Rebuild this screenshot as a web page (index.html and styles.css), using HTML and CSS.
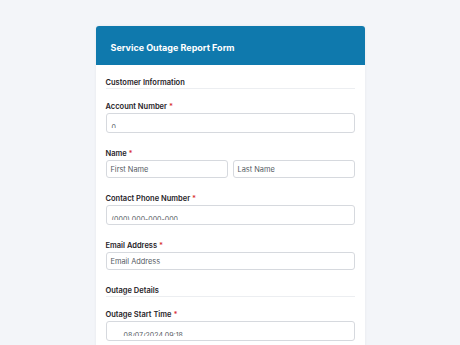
FILE: index.html
```html
<!DOCTYPE html>
<html lang="en">
<head>
    <meta charset="utf-8">
    <meta name="viewport" content="width=device-width, initial-scale=1.0">
    <title>Service Outage Report Form</title>
    <link rel="stylesheet" href="styles.css">
</head>
<body>

    <div class="card">
        <div class="card-head">Service Outage Report Form</div>

        <div class="card-body">
            <!-- 顧客情報 -->
            <div class="section">Customer Information</div>

            <div class="group">
                <div class="label">Account Number <span class="req">*</span></div>
                <div class="field tall"><div class="clip">0</div></div>
            </div>

            <div class="group">
                <div class="label">Name <span class="req">*</span></div>
                <div class="pair">
                    <div class="field"><span class="ph">First Name</span></div>
                    <div class="field"><span class="ph">Last Name</span></div>
                </div>
            </div>

            <div class="group">
                <div class="label">Contact Phone Number <span class="req">*</span></div>
                <div class="field tall"><div class="clip">(000) 000-000-000</div></div>
            </div>

            <div class="group">
                <div class="label">Email Address <span class="req">*</span></div>
                <div class="field"><span class="ph">Email Address</span></div>
            </div>

            <!-- 障害の詳細 -->
            <div class="section">Outage Details</div>

            <div class="group">
                <div class="label">Outage Start Time <span class="req">*</span></div>
                <div class="field tall"><div class="clip indent">08/07/2024 09:18</div></div>
            </div>
        </div>
    </div>

</body>
</html>
```

FILE: styles.css
```css
body {
    margin: 0;
    padding-top: 26px;
    background-color: #f3f5f9;
    font-family: Inter, "Liberation Sans", sans-serif;
    color: #1f2328;
}

/* カード */
.card {
    width: 269px;
    margin: 0 auto;
    background: #fff;
    border-radius: 3px 3px 0 0;
    box-shadow: 0 0 3px rgba(0, 0, 0, 0.06);
}

.card-head {
    box-sizing: border-box;
    height: 39px;
    padding: 3px 0 0 15px;
    display: flex;
    align-items: center;
    background-color: #0f79ad;
    color: #fff;
    font-size: 9px;
    font-weight: 700;
    border-radius: 3px 3px 0 0;
}

.card-body {
    padding: 13px 10px 10px;
}

/* 見出し */
.section {
    font-size: 7.5px;
    font-weight: 600;
    line-height: 10px;
    border-bottom: 1px solid #eceef1;
    margin-bottom: 13px;
}

.group {
    margin-bottom: 16px;
}

.label {
    font-size: 7.5px;
    font-weight: 600;
    line-height: 10px;
    margin-bottom: 1px;
}

.req {
    color: #d9343a;
}

/* 入力欄 */
.field {
    box-sizing: border-box;
    height: 18px;
    border: 1px solid #d6d9de;
    border-radius: 3px;
    padding: 0 4px;
    display: flex;
    align-items: center;
    overflow: hidden;
    background: #fff;
}

.field.tall {
    height: 20px;
    align-items: flex-start;
}

.ph {
    font-size: 7.4px;
    color: #555b63;
}

.clip {
    height: 4px;
    margin-top: 10px;
    overflow: hidden;
    font-size: 7px;
    line-height: 8px;
    color: #555b63;
    padding-left: 1px;
}

.clip.indent {
    padding-left: 13px;
}

.pair {
    display: grid;
    grid-template-columns: 1fr 1fr;
    gap: 5px;
}
```
